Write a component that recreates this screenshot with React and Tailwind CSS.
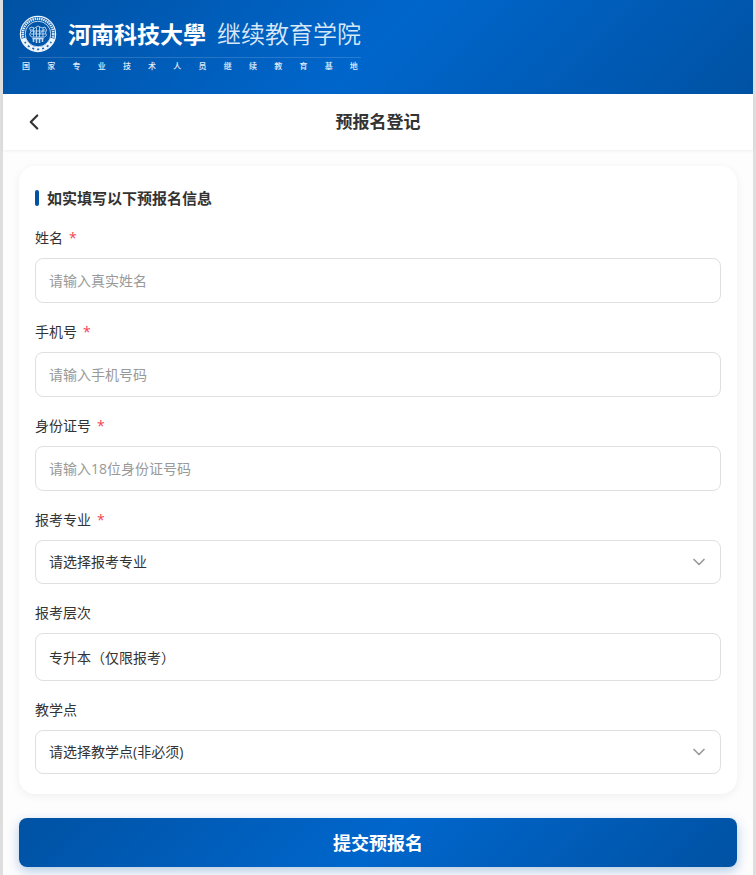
import { useState } from 'react'
import { ChevronDown, ChevronLeft } from 'lucide-react'

const inputClass =
  'block w-full rounded-lg border border-[#dedfe0] bg-white px-[13px] text-sm text-[#333] outline-none placeholder:text-[#999] focus:border-[#0066cc]'

const majors = ['计算机科学与技术', '机械设计制造及其自动化', '护理学', '会计学']
const sites = ['校本部', '洛阳教学点', '郑州教学点']

function Emblem() {
  return (
    <svg aria-hidden="true" className="h-[38px] w-[38px] shrink-0" fill="none" viewBox="0 0 38 38">
      <circle cx="19" cy="19" r="17.6" stroke="#f2f7fd" strokeWidth="1.2" />
      <circle cx="19" cy="19" r="15.3" stroke="#dce9f8" strokeDasharray="1.5 0.7" strokeWidth="2.6" />
      <path d="M4.4 23.5A15.3 15.3 0 0 0 33.6 23.5" stroke="#eef5fc" strokeWidth="4.4" />
      <path
        d="M5.8 26.8A15.3 15.3 0 0 0 32.2 26.8"
        stroke="#1762b5"
        strokeDasharray="2 3"
        strokeWidth="1.6"
      />
      <circle cx="19" cy="19" r="12.8" stroke="#e8f1fb" strokeWidth="0.8" />
      <g stroke="#c3daf3" strokeWidth="0.9">
        <path d="M10.5 13l2.5-1 2 1.5 4-2.5 4 2 3-1 1.5 3-1 3 1 2.5-2 1.5H12.5l-2-2.5 1.5-3z" />
        <path d="M11.5 16h15M11.5 19h15M14.5 12.5v9M17.5 12.5V22M20.5 12v10M24 13v9M12.5 14l5 5M25.5 14l-5 5" />
        <path d="M13.5 23.5h11" strokeWidth="1.6" />
        <path d="M14.5 23v4M17.5 23v5M20.5 23v5M23.5 23v4" strokeWidth="1.5" />
      </g>
    </svg>
  )
}

function SiteHeader() {
  return (
    <header className="h-[94px] bg-[linear-gradient(135deg,#0052a3_0%,#0066cc_50%,#0052a3_100%)] px-4 pt-[15px] text-white">
      <div className="w-[342px]">
        <div className="flex items-center">
          <Emblem />
          <span className="ml-[11px] text-[23px] leading-[38px] font-bold">河南科技大學</span>
          <span className="ml-[11px] text-2xl leading-[38px] font-[350] whitespace-nowrap text-[#d9e8f8]">
            继续教育学院
          </span>
        </div>
        <div className="mt-1 flex justify-between border-t border-white/15 px-[3px] pt-[2px] text-[8px] leading-3 font-medium text-[#e4eefa]">
          {Array.from('国家专业技术人员继续教育基地').map((char, index) => (
            <span key={index}>{char}</span>
          ))}
        </div>
      </div>
    </header>
  )
}

function Field({ id, label, required, children }) {
  return (
    <div>
      <label className="mb-[10px] block text-sm leading-[21px] text-[#333]" htmlFor={id}>
        {label}
        {required && <span className="ml-[6px] text-[#f5414f]">*</span>}
      </label>
      {children}
    </div>
  )
}

function SelectBox({ id, placeholder, options, value, onChange }) {
  return (
    <div className="relative">
      <select
        className={`${inputClass} h-11 appearance-none pr-10`}
        id={id}
        onChange={onChange}
        value={value}
      >
        <option value="">{placeholder}</option>
        {options.map((option) => (
          <option key={option} value={option}>
            {option}
          </option>
        ))}
      </select>
      <ChevronDown
        className="pointer-events-none absolute top-3 right-3 h-5 w-5 text-[#999]"
        strokeWidth={2}
      />
    </div>
  )
}

function App() {
  const [form, setForm] = useState({ name: '', phone: '', idCard: '', major: '', site: '' })

  const update = (key) => (event) => {
    setForm({ ...form, [key]: event.target.value })
  }

  return (
    <div className="min-h-screen bg-[#dedede] px-[3px] font-['Open_Sans','Noto_Sans_CJK_SC',sans-serif]">
      <div className="min-h-screen bg-[#fdfdfe]">
        <SiteHeader />

        <nav className="grid h-14 grid-cols-[64px_1fr_64px] items-center bg-white shadow-[0_1px_3px_rgba(0,0,0,0.06)]">
          <button aria-label="返回" className="flex h-10 items-center pl-[18px] text-[#333]" type="button">
            <ChevronLeft className="h-[26px] w-[26px]" strokeWidth={2} />
          </button>
          <h1 className="text-center text-[17px] leading-6 font-bold text-[#333]">预报名登记</h1>
        </nav>

        <form className="px-4 pt-4 pb-2" onSubmit={(event) => event.preventDefault()}>
          <section className="rounded-2xl bg-white px-4 pt-5 pb-5 shadow-[0_2px_10px_rgba(0,0,0,0.06)]">
            <h2 className="mb-[17px] flex items-center gap-2 text-[15px] leading-6 font-bold text-[#333]">
              <span className="h-4 w-1 rounded-sm bg-[#0052a3]" />
              如实填写以下预报名信息
            </h2>

            <div className="flex flex-col gap-[18px]">
              <Field id="name" label="姓名" required>
                <input
                  className={`${inputClass} h-[45px]`}
                  id="name"
                  onChange={update('name')}
                  placeholder="请输入真实姓名"
                  type="text"
                  value={form.name}
                />
              </Field>
              <Field id="phone" label="手机号" required>
                <input
                  className={`${inputClass} h-[45px]`}
                  id="phone"
                  onChange={update('phone')}
                  placeholder="请输入手机号码"
                  type="tel"
                  value={form.phone}
                />
              </Field>
              <Field id="idCard" label="身份证号" required>
                <input
                  className={`${inputClass} h-[45px]`}
                  id="idCard"
                  maxLength={18}
                  onChange={update('idCard')}
                  placeholder="请输入18位身份证号码"
                  type="text"
                  value={form.idCard}
                />
              </Field>
              <Field id="major" label="报考专业" required>
                <SelectBox
                  id="major"
                  onChange={update('major')}
                  options={majors}
                  placeholder="请选择报考专业"
                  value={form.major}
                />
              </Field>
              <Field id="level" label="报考层次">
                <input
                  className={`${inputClass} h-12`}
                  id="level"
                  readOnly
                  type="text"
                  value="专升本（仅限报考）"
                />
              </Field>
              <Field id="site" label="教学点">
                <SelectBox
                  id="site"
                  onChange={update('site')}
                  options={sites}
                  placeholder="请选择教学点(非必须)"
                  value={form.site}
                />
              </Field>
            </div>
          </section>

          <button
            className="mt-6 h-[49px] w-full rounded-lg bg-[linear-gradient(135deg,#0052a3_0%,#0066cc_50%,#0052a3_100%)] text-lg font-bold text-white shadow-[0_4px_12px_rgba(0,82,163,0.3)]"
            type="submit"
          >
            提交预报名
          </button>
        </form>
      </div>
    </div>
  )
}

export default App
